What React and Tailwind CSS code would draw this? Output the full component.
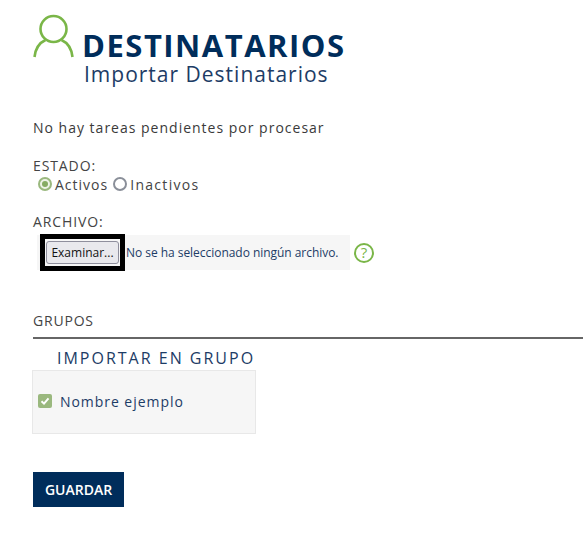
export default function App() {
  return (
    <div className="w-[583px] h-[540px] bg-white overflow-hidden pl-[33px] font-['Open_Sans',sans-serif] text-[#333]">
      {/* Header */}
      <div className="flex pt-[14px] h-[87px]">
        <svg width="41" height="44" viewBox="0 0 41 44" fill="none" stroke="#7ab648" strokeWidth="2.6" className="shrink-0">
          <circle cx="20.5" cy="15" r="13" />
          <path d="M1.5 43 C2.5 34 7 28.5 12.5 26" />
          <path d="M39.5 43 C38.5 34 34 28.5 28.5 26" />
        </svg>
        <div className="ml-[8px] pt-[14px]">
          <div className="text-[31px] leading-[34px] font-bold text-[#002d5b] tracking-[1.5px]">DESTINATARIOS</div>
          <div className="text-[21px] leading-[24px] text-[#1d3c66] ml-[2px] tracking-[1px]">Importar Destinatarios</div>
        </div>
      </div>

      <p className="mt-[31px] text-[14px] leading-[20px] tracking-[1px] text-[#3a3a3a]">No hay tareas pendientes por procesar</p>

      {/* Estado */}
      <div className="mt-[18px] text-[14px] leading-[20px] tracking-[0.9px] text-[#444]">ESTADO:</div>
      <div className="flex items-center h-[18px] -mt-px ml-[5px] text-[14px] tracking-[1px] text-[#444]">
        <span className="w-[14px] h-[14px] rounded-full border-2 border-[#9ab87e] bg-[#eef3e8] flex items-center justify-center">
          <span className="w-[6px] h-[6px] rounded-full bg-[#86ab63]"></span>
        </span>
        <span className="ml-[3px]">Activos</span>
        <span className="ml-[5px] w-[14px] h-[14px] rounded-full border-2 border-[#8a8f99] bg-white"></span>
        <span className="ml-[3px] tracking-[1.3px]">Inactivos</span>
      </div>

      {/* Archivo */}
      <div className="mt-[19px] text-[14px] leading-[20px] tracking-[0.9px] text-[#444]">ARCHIVO:</div>
      <div className="flex items-center mt-[3px] ml-[4px]">
        <div className="flex items-center w-[313px] h-[35px] bg-[#f6f6f6]">
          <div className="ml-[3px] w-[85px] h-[37px] shrink-0 border-[5px] border-black flex items-center justify-center bg-[#f6f6f6]">
            <button className="w-[73px] h-[23px] rounded-[3px] border border-[#8f8f9d] bg-[#e9e9ed] text-[12px] text-[#111] flex items-center justify-center">Examinar...</button>
          </div>
          <span className="ml-px text-[12px] tracking-[-0.04px] text-[#1d3c66] whitespace-nowrap">No se ha seleccionado ningún archivo.</span>
        </div>
        <div className="ml-[4px] w-[20px] h-[20px] rounded-full border-2 border-[#7ab648] text-[#7ab648] text-[15px] leading-none flex items-center justify-center">?</div>
      </div>

      {/* Grupos */}
      <div className="mt-[41px] text-[14px] leading-[20px] tracking-[0.8px] text-[#444]">GRUPOS</div>
      <div className="mt-[6px] h-[2px] bg-[#666]"></div>
      <div className="mt-[9px] ml-[24px] text-[16px] leading-[20px] tracking-[2px] text-[#1d3c66]">IMPORTAR EN GRUPO</div>
      <div className="mt-[2px] -ml-px w-[224px] h-[64px] bg-[#f6f6f6] border border-[#e8e8e8] flex items-center pl-[5px] pb-[2px]">
        <span className="w-[14px] h-[14px] rounded-[2px] bg-[#9ab87e] flex items-center justify-center">
          <svg width="10" height="10" viewBox="0 0 10 10" fill="none" stroke="#fff" strokeWidth="2"><path d="M1.5 5.2 L4 7.6 L8.5 2.4" /></svg>
        </span>
        <span className="ml-[8px] text-[14px] tracking-[0.95px] text-[#1d3c66]">Nombre ejemplo</span>
      </div>

      <button className="block mt-[38px] w-[91px] h-[35px] bg-[#002d5b] text-white text-[14px] font-semibold">GUARDAR</button>
    </div>
  )
}
